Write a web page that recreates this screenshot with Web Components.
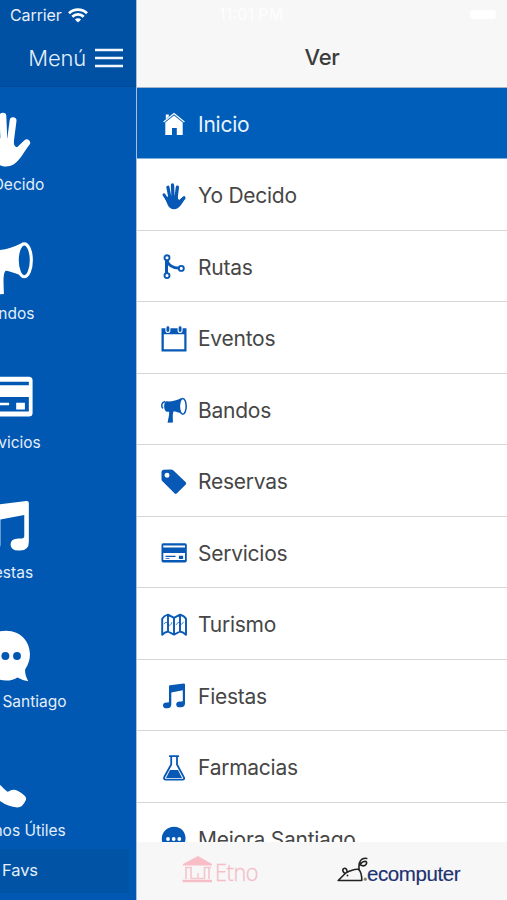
<!DOCTYPE html>
<html lang="es">
<head>
<meta charset="utf-8">
<title>Menú</title>
<style>
    html, body {
        margin: 0;
        padding: 0;
        overflow: hidden;
        font-family: Inter, 'Liberation Sans', sans-serif;
    }
</style>
</head>
<body>
<app-shell>
    <home-panel slot="home">
        <home-tile icon="hand">Yo Decido</home-tile>
        <home-tile icon="megaphone">Bandos</home-tile>
        <home-tile icon="card">Servicios</home-tile>
        <home-tile icon="music">Fiestas</home-tile>
        <home-tile icon="chat">Mejora Santiago</home-tile>
        <home-tile icon="phone">Teléfonos Útiles</home-tile>
    </home-panel>
    <side-menu slot="menu" heading="Ver">
        <menu-item icon="home" active>Inicio</menu-item>
        <menu-item icon="hand">Yo Decido</menu-item>
        <menu-item icon="route">Rutas</menu-item>
        <menu-item icon="calendar">Eventos</menu-item>
        <menu-item icon="megaphone">Bandos</menu-item>
        <menu-item icon="tag">Reservas</menu-item>
        <menu-item icon="card">Servicios</menu-item>
        <menu-item icon="map">Turismo</menu-item>
        <menu-item icon="music">Fiestas</menu-item>
        <menu-item icon="flask">Farmacias</menu-item>
        <menu-item icon="chat">Mejora Santiago</menu-item>
    </side-menu>
</app-shell>

<script>
// All icons share a 26x26 box. --hole is the colour behind the icon.
const icons = {
    home: `<path d="M4.8 8.2V3.4h3v2.2z" fill="currentColor"/>
        <path d="M2.6 11 13 2.6 23.4 11" fill="none" stroke="currentColor" stroke-width="1.2"/>
        <path d="M4.3 11.4 13 4.5l8.700 6.900V24h-5.900v-7h-4.800v7H4.300z" fill="currentColor"/>`,
    hand: `<g fill="none" stroke="currentColor" stroke-linecap="round" stroke-linejoin="round">
        <path d="M3 11.8 7 18" stroke-width="3"/>
        <path d="M6.9 4.2 9 15" stroke-width="3.200"/>
        <path d="M11.5 2 12 14" stroke-width="3.300"/>
        <path d="M16.400 4.200 15 15" stroke-width="3.300"/>
        <path d="M23 14.800 17.5 20" stroke-width="3.200"/></g>
        <path d="M4.4 16 7.6 12.6h9.1c-.2 2 .2 4.2 1.6 4.3 1.2 0 2.2-1.6 3.4-2.8l2.2 2.1C21 20 18.6 26.200 13 26.200c-5 0-6.300-4-8.600-10.200z" fill="currentColor"/>`,
    route: `<g fill="none" stroke="currentColor">
        <circle cx="6" cy="3.800" r="2.500" stroke-width="1.900"/>
        <circle cx="6" cy="21.600" r="2.500" stroke-width="1.900"/>
        <circle cx="20.300" cy="14.400" r="2.500" stroke-width="1.900"/>
        <path d="M5.500 6.300V19" stroke-width="3"/>
        <path d="M5.800 6.500C8 12 12 14.100 17.800 14.100" stroke-width="2.800"/></g>`,
    calendar: `<path fill="currentColor" fill-rule="evenodd" d="M.5 2.200H25.500V25.500H.500zM2.800 8.200V23.300H23.300V8.200z"/>
        <g stroke-linecap="round"><path d="M6.900 1.800V4.500M19.100 1.800V4.500" stroke="var(--hole)" stroke-width="5"/>
        <path d="M6.900 1.800V4.500M19.100 1.800V4.500" stroke="currentColor" stroke-width="2.900"/></g>`,
    megaphone: `<path fill="currentColor" d="M4.800 4.300C10 4.800 15 4 20.500 1.100L23 17C18.800 16.500 15.800 14.500 12.800 14.300c-1.300 1.200-1 6.500-.8 11.200l-5.400.3c.5-4 1.900-7.500 1.500-11H5.800C2.500 14 2.500 6 4.800 4.300z"/>
        <path d="M4 4.500C.2 5.400-.1 9.700 2 11.300" fill="none" stroke="currentColor" stroke-width="1.500"/>
        <ellipse cx="21.800" cy="9.300" rx="3.400" ry="7.900" fill="var(--hole)" stroke="currentColor" stroke-width="1.500"/>`,
    tag: `<path fill="currentColor" fill-rule="evenodd" d="M2.500 .8 9.500 .400Q11.200.400 12.200 1.200L24.800 13.300Q25.700 14.400 24.800 15.500L15.700 24.500Q14.700 25.400 13.700 24.500L1.200 12Q.500 11.300.5 10V3Q.5 1 2.500 .8zM6 3.800a2.500 2.500 0 1 0 .01 5 2.500 2.500 0 1 0-.01-5z"/>`,
    card: `<path fill="currentColor" fill-rule="evenodd" d="M2.200 3.200H24q1.800 0 1.800 1.800V20.700q0 1.700-1.800 1.700H2.200Q.5 22.400.5 20.700V5q0-1.800 1.700-1.800zM2.300 5.600V7.400H24V5.600zM2.300 13V20H24V13zM17.900 15.800h4.200v3.200h-4.200zM4.500 15.800h10v1.200H4.500zM4.500 18.200h4v.9h-4z"/>`,
    map: `<g fill="none" stroke="currentColor" stroke-linejoin="round">
        <path d="M1.200 6.800Q3 3.700 7 2.700L13 5.800 19 2.700Q23.300 3.700 25 6.800V22.800Q22.500 20 19 19.500L13 22.600 7 19.500Q3.500 20 1.200 22.800zM7 2.700V19.500M13 5.800V22.600M19 2.700V19.500" stroke-width="1.900"/>
        <path d="M3 12.200Q5 8.500 7 12T11 10.200M15 13Q17 9 19 11.300T22.500 9.800" stroke-width="1" opacity=".7"/></g>`,
    music: `<path fill="currentColor" d="M8 3.300Q8 2.400 9 2.200L22.800.5Q24 .4 24 1.500V20.200Q24 24.300 19.800 24.300H19Q15.300 24.300 15.200 21.400 15.200 18.500 19 18.500H20.800Q21.800 18.500 21.800 17.500V7.200L10.300 9.400V21.200Q10.300 25.200 6.400 25.200H5.500Q2 25.200 2 22.400 2 19.500 5.600 19.500H7Q8 19.500 8 18.500z"/>`,
    flask: `<path d="M8.800 1.200H17.300M10.200 1.600V9.500L3.300 22Q2.300 24.600 5 24.700H21.300Q24 24.600 22.900 22.300L16 9.500V1.600" fill="none" stroke="currentColor" stroke-width="1.800" stroke-linecap="round"/>
        <path d="M9 15H17L21 22.900H5z" fill="currentColor"/>`,
    chat: `<path fill="currentColor" fill-rule="evenodd" d="M13 .8C6.200.8.8 6 .8 12.800S6.200 24.800 13 24.800Q16.500 24.800 18.500 23.300 21 24.700 23.700 25.200 22 22 22.200 19.500C27.500 12 23.500.8 13 .8z"/>
        <g fill="var(--hole)"><circle cx="7" cy="13" r="1.900"/><circle cx="12.700" cy="13" r="1.900"/><circle cx="18.300" cy="13" r="1.900"/></g>`,
    phone: `<path fill="currentColor" d="M3 1Q7 3 8 6 7 8 6 9 7.500 11.500 10.500 13.300 12.500 15.500 13.700 16.300 14.500 16 15.300 15.500 17 14.900 19 16 23.500 18.500 22.500 20.300 21 23.800 18.500 23.800 14 23.500 10 20.600C5 17 2 13 1 8 .3 4 1.500 2 3 1z"/>`
};

// Draws one icon from the list above
class AppIcon extends HTMLElement {
    constructor() {
        super();
        this.attachShadow({ mode: 'open' });
    }

    connectedCallback() {
        this.shadowRoot.innerHTML = `
            <style>
                :host { display: block; flex: none; width: 26px; height: 26px; }
                svg { display: block; width: 100%; height: 100%; overflow: visible; }
            </style>
            <svg viewBox="0 0 26 26">${icons[this.getAttribute('name')]}</svg>
        `;
    }
}

class HomeTile extends HTMLElement {
    constructor() {
        super();
        this.attachShadow({ mode: 'open' });
    }

    connectedCallback() {
        this.shadowRoot.innerHTML = `
            <style>
                :host {
                    display: flex;
                    flex-direction: column;
                    align-items: center;
                    box-sizing: border-box;
                    height: 129.4px;
                    padding-top: 24.500px;
                    color: white;
                    --hole: #0058b3;
                }
                app-icon { width: 54px; height: 54px; margin-right: 3px; }
                span {
                    margin-top: 9px;
                    font-size: 15.500px;
                    line-height: 20px;
                    color: #e3eefa;
                    white-space: nowrap;
                }
            </style>
            <app-icon name="${this.getAttribute('icon')}"></app-icon>
            <span><slot></slot></span>
        `;
    }
}

const homeTemplate = document.createElement('template');

homeTemplate.innerHTML = `
    <style>
        :host {
            display: flex;
            flex-direction: column;
            width: 136px;
            height: 900px;
            overflow: hidden;
            background: #0058b3;
            color: #e6effa;
        }
        header {
            flex: none;
            box-sizing: border-box;
            height: 87px;
            background: #0051a4;
            border-bottom: 1px solid #004b98;
        }
        .status {
            display: flex;
            align-items: center;
            gap: 6px;
            height: 30px;
            padding-left: 10px;
            font-size: 16px;
            letter-spacing: -0.1px;
        }
        .bar {
            display: flex;
            align-items: center;
            justify-content: flex-end;
            gap: 9px;
            height: 55px;
            padding-right: 13px;
            font-size: 22px;
            font-weight: 300;
            letter-spacing: -0.2px;
        }
        .lines { width: 28px; height: 20px; }
        .tiles {
            flex: 1;
            min-height: 0;
            width: 160px;
            margin-left: -73px;
        }
        .favs {
            flex: none;
            box-sizing: border-box;
            height: 44px;
            width: 129px;
            margin-bottom: 7px;
            padding: 10px 0 0 2px;
            background: #0053a5;
            font-size: 16.500px;
            line-height: 22px;
            letter-spacing: -0.1px;
        }
    </style>
    <header>
        <div class="status">
            <span>Carrier</span>
            <svg width="20" height="15" viewBox="0 0 20 15">
                <path d="M1 5.300A13 13 0 0 1 19 5.300M4.300 8.700A8 8 0 0 1 15.700 8.700" fill="none" stroke="white" stroke-width="2.700"/>
                <path d="M6.900 11.400Q10 8.900 13.100 11.400L10 14.600z" fill="white"/>
            </svg>
        </div>
        <div class="bar">
            <span>Menú</span>
            <svg class="lines" viewBox="0 0 28 20"><path d="M0 2H28M0 10H28M0 18H28" stroke="#f2f7fd" stroke-width="2.600"/></svg>
        </div>
    </header>
    <div class="tiles"><slot></slot></div>
    <div class="favs">Favs</div>
`;

class HomePanel extends HTMLElement {
    constructor() {
        super();
        this.attachShadow({ mode: 'open' });
        this.shadowRoot.appendChild(homeTemplate.content.cloneNode(true));
    }
}

class MenuItem extends HTMLElement {
    constructor() {
        super();
        this.attachShadow({ mode: 'open' });
    }

    connectedCallback() {
        this.shadowRoot.innerHTML = `
            <style>
                :host {
                    display: flex;
                    align-items: center;
                    gap: 11px;
                    box-sizing: border-box;
                    height: 71.500px;
                    padding: 3px 0 0 25px;
                    border-bottom: 1px solid #d6d6d8;
                    background: white;
                    color: #464646;
                    font-size: 21px;
                    letter-spacing: -0.25px;
                    --hole: white;
                }
                :host([active]) {
                    background: #005ebb;
                    color: #eaf3fd;
                    border-color: #7fb0de;
                }
                app-icon { color: #0759b5; }
                :host([active]) app-icon { color: white; }
                span { white-space: nowrap; }
            </style>
            <app-icon name="${this.getAttribute('icon')}"></app-icon>
            <span><slot></slot></span>
        `;
    }
}

// Logos of the sponsors at the foot of the menu
const sponsorTemplate = document.createElement('template');

sponsorTemplate.innerHTML = `
    <style>
        :host {
            display: flex;
            align-items: flex-start;
            flex: none;
            box-sizing: border-box;
            height: 58px;
            padding: 13px 0 0 44px;
            background: #f7f7f7;
        }
        svg { display: block; overflow: visible; flex: none; }
        .etno {
            display: flex;
            width: 156px;
            color: #f4bdc8;
            font-family: 'Open Sans', sans-serif;
            font-weight: 300;
            font-size: 23px;
            line-height: 35px;
            letter-spacing: -0.4px;
        }
        .etno span { margin-left: 2px; -webkit-text-stroke: 0.3px #f4bdc8; transform: scaleX(0.94); transform-origin: left; }
        .ecomputer {
            display: flex;
            color: #1d3270;
            font-family: 'Liberation Sans', sans-serif;
            font-size: 20.500px;
            line-height: 38px;
            letter-spacing: -0.4px;
        }
        .ecomputer span { -webkit-text-stroke: 0.15px #1d3270; }
    </style>
    <div class="etno">
        <svg width="32" height="28" viewBox="0 0 32 28">
            <path d="M2 9 17 1 31 9V10.500H2z" fill="#f9bdc7"/>
            <path d="M5 12V24M10 12V24M23.500 12V24M28 12V24" stroke="#f6c6cf" stroke-width="1.700"/>
            <path d="M4 12.500H11M23 12.500H30M10 23.500H24M17 18V23" stroke="#f6c6cf" stroke-width="1.500"/>
            <path d="M1.500 26H31" stroke="#f4bdc8" stroke-width="2.500"/>
        </svg>
        <span>Etno</span>
    </div>
    <div class="ecomputer">
        <svg width="30" height="28" viewBox="0 0 30 28">
            <g fill="none" stroke="#222" stroke-width="1.600" stroke-linejoin="round" stroke-linecap="round">
                <path d="M1.200 25.500 9 17.800Q17 13.500 21.500 14.300 24.800 17 24.800 25.500z"/>
                <path d="M7.800 18.500Q4.500 15.500 6.500 13.600 9.500 12 10.200 16.800"/>
                <path d="M22 14.500Q21.500 6.500 25 4.200 27.500 2.800 29.700 3.500M23 9.500Q25 6.500 28.500 6.300 30.500 7 29 9.500 27 12 23 9.800"/>
            </g>
            <circle cx="10.500" cy="20.500" r=".9" fill="#222"/>
            <circle cx="28.300" cy="24.200" r="1.600" fill="#85856f"/>
        </svg>
        <span>ecomputer</span>
    </div>
`;

class SponsorBar extends HTMLElement {
    constructor() {
        super();
        this.attachShadow({ mode: 'open' });
        this.shadowRoot.appendChild(sponsorTemplate.content.cloneNode(true));
    }
}

class SideMenu extends HTMLElement {
    constructor() {
        super();
        this.attachShadow({ mode: 'open' });
    }

    connectedCallback() {
        this.shadowRoot.innerHTML = `
            <style>
                :host {
                    display: flex;
                    flex-direction: column;
                    box-sizing: border-box;
                    height: 900px;
                    background: white;
                    border-left: 1px solid #a9bfdc;
                }
                header {
                    flex: none;
                    box-sizing: border-box;
                    height: 87.500px;
                    background: #f7f7f7;
                    border-bottom: 1px solid #a5b3c8;
                }
                .status {
                    display: flex;
                    align-items: center;
                    justify-content: space-between;
                    height: 28px;
                    padding: 0 11px 0 82px;
                    color: #fdfdfd;
                    font-size: 16px;
                    font-weight: 500;
                }
                .battery { width: 26px; height: 9px; border-radius: 3px; background: white; }
                .title {
                    height: 59px;
                    line-height: 59px;
                    text-align: center;
                    font-size: 22px;
                    font-weight: 500;
                    letter-spacing: -0.3px;
                    color: #3c3c3c;
                }
                .list { flex: 1; min-height: 0; overflow: hidden; }
                menu-item, ::slotted(menu-item) { margin-left: -1px; }
            </style>
            <header>
                <div class="status"><span>11:01 PM</span><div class="battery"></div></div>
                <div class="title">${this.getAttribute('heading')}</div>
            </header>
            <div class="list"><slot></slot></div>
            <sponsor-bar></sponsor-bar>
        `;
    }
}

const shellTemplate = document.createElement('template');

shellTemplate.innerHTML = `
    <style>
        :host {
            display: grid;
            grid-template-columns: 136px 371px;
            width: 507px;
            height: 900px;
            overflow: hidden;
        }
    </style>
    <slot name="home"></slot>
    <slot name="menu"></slot>
`;

class AppShell extends HTMLElement {
    constructor() {
        super();
        this.attachShadow({ mode: 'open' });
        this.shadowRoot.appendChild(shellTemplate.content.cloneNode(true));
    }
}

customElements.define('app-icon', AppIcon);
customElements.define('home-tile', HomeTile);
customElements.define('home-panel', HomePanel);
customElements.define('menu-item', MenuItem);
customElements.define('sponsor-bar', SponsorBar);
customElements.define('side-menu', SideMenu);
customElements.define('app-shell', AppShell);
</script>
</body>
</html>
